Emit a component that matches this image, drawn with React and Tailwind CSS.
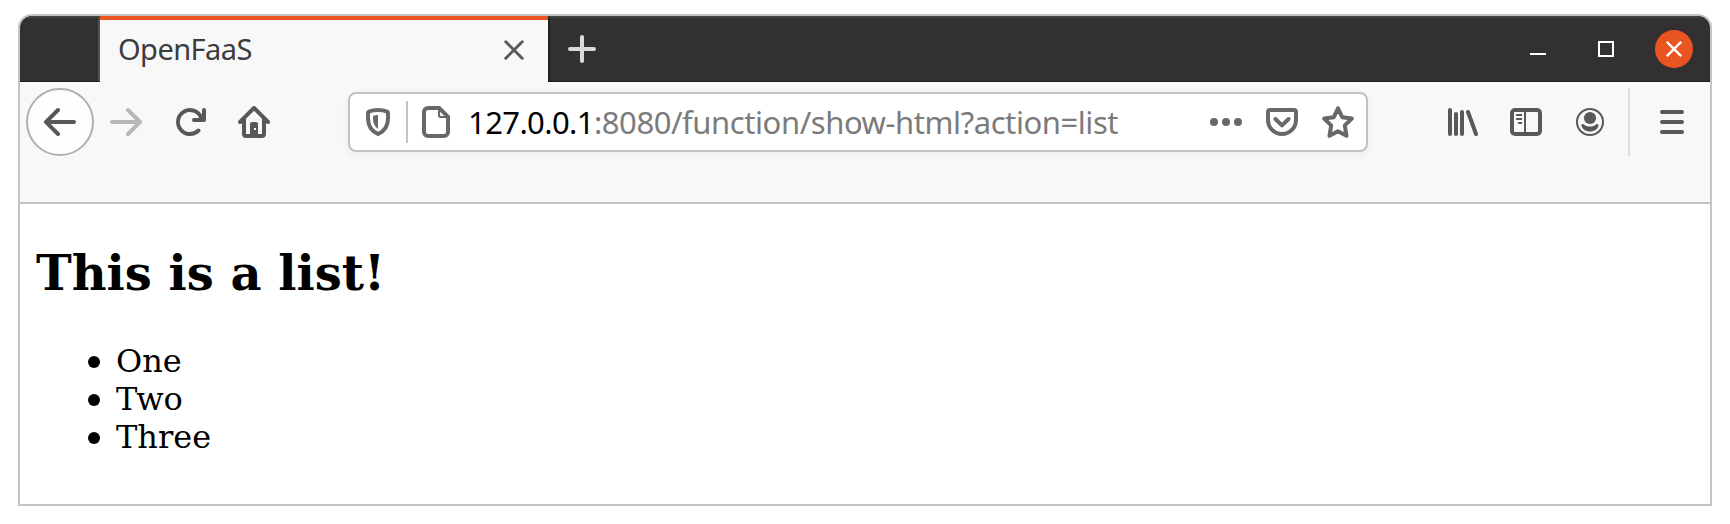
const Icon = ({ children, className = "", ...rest }) => (
  <svg viewBox="0 0 16 16" fill="currentColor" className={`block h-8 w-8 shrink-0 ${className}`} {...rest}>
    {children}
  </svg>
);

const arrowPath =
  "M15 7H3.414l4.293-4.293a1 1 0 0 0-1.414-1.414l-6 6a1 1 0 0 0 0 1.414l6 6a1 1 0 0 0 1.414-1.414L3.414 9H15a1 1 0 0 0 0-2z";

function TitleBar() {
  return (
    <div className="flex h-[66px] shrink-0 bg-[#333031]">
      <div className="w-20 border-t-2 border-r-2 border-b border-t-[#444243] border-r-[#555354] border-b-[#1d1b1c]" />
      <div className="flex w-[448px] items-center justify-between border-t-4 border-[#e95420] bg-[#f8f8f8] pr-6 pb-0.5 pl-[18px]">
        <span className="pb-[3px] text-[29px] leading-none tracking-[-0.55px] text-[#3c3c3d]">OpenFaaS</span>
        <svg viewBox="0 0 20 20" className="block h-5 w-5" fill="none" stroke="#58595a" strokeWidth="3" strokeLinecap="round">
          <path d="M1.8 1.8 18.2 18.2M18.2 1.8 1.8 18.2" />
        </svg>
      </div>
      <div className="flex flex-1 items-center border-t-2 border-b border-l-2 border-t-[#444243] border-b-[#1d1b1c] border-l-[#222021] pr-[17px] pb-px pl-[18px]">
        <svg viewBox="0 0 28 28" className="block h-7 w-7" fill="none" stroke="#dadada" strokeWidth="4" strokeLinecap="round">
          <path d="M14 2v24M2 14h24" />
        </svg>
        <div className="flex-1" />
        <div className="mt-[10px] mr-[52px] h-0.5 w-4 bg-white" />
        <div className="mr-[41px] h-4 w-4 border-2 border-white" />
        <div className="flex h-[38px] w-[38px] items-center justify-center rounded-full bg-[#e95420]">
          <svg viewBox="0 0 16 16" className="block h-4 w-4" fill="none" stroke="#fff" strokeWidth="2.4">
            <path d="M.8.8 15.2 15.2M15.2.8.8 15.2" />
          </svg>
        </div>
      </div>
    </div>
  );
}

function AddressBar() {
  return (
    <div className="ml-[78px] flex h-[60px] w-[1020px] items-center rounded-lg border-2 border-[#c1c1c1] bg-white pr-3 pl-3 text-[#686868] shadow-[0_2px_8px_rgba(0,0,0,0.06)]">
      <Icon>
        <path d="M8 2c1.8 0 3.4.3 4.6.8.3.1.4.3.4.6v2.8c0 3.400-1.700 6.300-5 7.800C4.700 12.500 3 9.600 3 6.200V3.400c0-.3.1-.5.400-.6C4.600 2.300 6.200 2 8 2z" fill="none" stroke="currentColor" strokeWidth="2" />
        <path d="M8 4.500v7C6.300 10.200 5.500 8.400 5.500 6.200V5C6.300 4.700 7.100 4.500 8 4.500z" />
      </Icon>
      <div className="ml-3 h-[42px] w-0.5 bg-[#c4c4c4]" />
      <Icon className="ml-3">
        <path d="M4 1h5.600L14 5.400V13a2 2 0 0 1-2 2H4a2 2 0 0 1-2-2V3a2 2 0 0 1 2-2z" fill="none" stroke="currentColor" strokeWidth="2" />
        <path d="M9 1.500v3.400a1.100 1.100 0 0 0 1.100 1.100H14V5h-3.500a.5.5 0 0 1-.5-.5V1.500z" />
      </Icon>
      <div className="ml-4 whitespace-pre text-[31px] leading-none text-[#7b7b7b]">
        <span className="tracking-[-0.6px] text-black">127.0.0.1</span>
        <span className="tracking-[-0.43px]">:8080/function/show-html?action=list</span>
      </div>
      <div className="flex-1" />
      <Icon>
        <circle cx="2" cy="8" r="2" />
        <circle cx="8" cy="8" r="2" />
        <circle cx="14" cy="8" r="2" />
      </Icon>
      <Icon className="ml-6" fill="none" stroke="currentColor" strokeWidth="2" strokeLinecap="round" strokeLinejoin="round">
        <path d="M2 2h12a1 1 0 0 1 1 1v4a7 7 0 0 1-14 0V3a1 1 0 0 1 1-1z" />
        <path d="M4.700 6.500 8 9.700l3.300-3.200" />
      </Icon>
      <Icon className="ml-6" fill="none" stroke="currentColor" strokeWidth="2" strokeLinejoin="round">
        <path d="M8 1.200l2.100 4.400 4.800.7-3.500 3.400.85 5.200L8 12.600l-4.250 2.300.85-5.200L1.100 6.300l4.800-.7z" />
      </Icon>
    </div>
  );
}

function Toolbar() {
  return (
    <div className="flex h-[122px] shrink-0 items-start border-b-2 border-[#c3c3c3] bg-[#f8f8f8] pt-1.5 text-[#58585a]">
      <div className="flex h-[68px] flex-1 items-center pl-1.5">
        <div className="flex h-[68px] w-[68px] items-center justify-center rounded-full border-2 border-[#b0b0b0] bg-[#fefefe]">
          <Icon><path d={arrowPath} /></Icon>
        </div>
        <Icon className="ml-4 rotate-180 text-[#b7b7b7]"><path d={arrowPath} /></Icon>
        <Icon className="ml-8">
          <path d="M15 1a1 1 0 0 0-1 1v2.418A6.995 6.995 0 1 0 8 15a6.954 6.954 0 0 0 4.950-2.050 1 1 0 0 0-1.414-1.414A5.019 5.019 0 1 1 12.549 6H10a1 1 0 0 0 0 2h5a1 1 0 0 0 1-1V2a1 1 0 0 0-1-1z" />
        </Icon>
        <Icon className="ml-8">
          <path fillRule="evenodd" d="M15.707 7.293l-7-7a1 1 0 0 0-1.414 0l-7 7a1 1 0 0 0 1.414 1.414L2 8.414V14a2 2 0 0 0 2 2h8a2 2 0 0 0 2-2V8.414l.293.293a1 1 0 0 0 1.414-1.414zM4 14V6.414l4-4 4 4V14h-2V9a1 1 0 0 0-1-1H7a1 1 0 0 0-1 1v5zM8 11h1v1H8z" />
        </Icon>
        <AddressBar />
        <div className="flex-1" />
        <Icon fill="none" stroke="currentColor" strokeWidth="2" strokeLinecap="round">
          <path d="M2 2v12M5 4v10M8 3v11M11 3l4 11" />
        </Icon>
        <Icon className="ml-8">
          <rect x="1" y="2" width="14" height="12" rx="1.500" fill="none" stroke="currentColor" strokeWidth="2" />
          <path d="M7 2h1v12H7zM3.400 4H6v1H3.400a.4.4 0 0 1 0-1zM3.400 6H6v1H3.400a.4.4 0 0 1 0-1zM4.400 8H6v1H4.400a.4.4 0 0 1 0-1z" />
        </Icon>
        <Icon className="ml-8">
          <circle cx="8" cy="8" r="6.500" fill="none" stroke="currentColor" strokeWidth="1" />
          <circle cx="8" cy="6" r="3.050" />
          <path d="M5 9.200c.8.700 1.800 1.100 3 1.100s2.200-.4 3-1.100c.6-.4 1.400 0 1.300.700C11.900 11.600 10.200 12.800 8 12.800S4.100 11.600 3.700 9.900c-.1-.7.7-1.100 1.300-.7z" />
        </Icon>
        <div className="ml-[22px] h-[68px] w-0.5 bg-[#dcdcdc]" />
        <Icon className="mr-[22px] ml-[26px]" fill="none" stroke="currentColor" strokeWidth="2" strokeLinecap="round">
          <path d="M3 3h10M3 8h10M3 13h10" />
        </Icon>
      </div>
    </div>
  );
}

function Page() {
  return (
    <div className="flex-1 bg-white px-4 pt-[41px] font-['DejaVu_Serif',serif] text-black">
      <h1 className="text-[48px] leading-[56px] font-bold">This is a list!</h1>
      <ul className="mt-[41px] text-[32px] leading-[38px]">
        {["One", "Two", "Three"].map((item) => (
          <li key={item} className="flex items-center pl-[52px]">
            <span className="mt-0.5 mr-4 h-3 w-3 rounded-full bg-black" />
            {item}
          </li>
        ))}
      </ul>
    </div>
  );
}

export default function App() {
  return (
    <div className="h-[524px] w-[1730px] bg-white px-[18px] pt-[14px] pb-[18px] font-['Noto_Sans',sans-serif]">
      <div className="flex h-[492px] flex-col overflow-hidden rounded-t-[14px] border-2 border-[#c5c5c5]">
        <TitleBar />
        <Toolbar />
        <Page />
      </div>
    </div>
  );
}
